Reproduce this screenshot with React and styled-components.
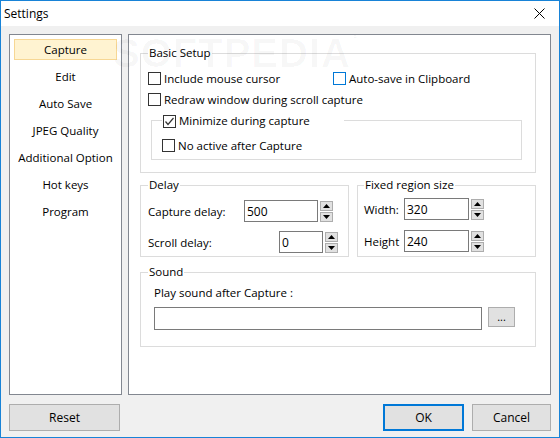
import React from "react";
import styled, { createGlobalStyle } from "styled-components";

const GlobalStyle = createGlobalStyle`
  html, body { margin: 0; padding: 0; background: #fff; }
  body {
    font-family: "Open Sans", "Noto Sans", sans-serif;
    font-size: 11.5px;
    color: #000;
  }
  * { box-sizing: border-box; }
`;

const navItems = [
  "Capture",
  "Edit",
  "Auto Save",
  "JPEG Quality",
  "Additional Option",
  "Hot keys",
  "Program",
];

const CheckIcon = () => (
  <svg width="11" height="11" viewBox="0 0 11 11">
    <polyline points="1.5,5.5 4,8.5 9.5,2" fill="none" stroke="#333" strokeWidth="1.2" />
  </svg>
);

const Arrow = ({ down }) => (
  <svg width="7" height="4" viewBox="0 0 7 4">
    <polygon points={down ? "0,0 7,0 3.5,4" : "0,4 7,4 3.5,0"} fill="#000" />
  </svg>
);

const Check = ({ label, checked, focused, width }) => (
  <CheckItem width={width}>
    <Box focused={focused}>{checked && <CheckIcon />}</Box>
    <span>{label}</span>
  </CheckItem>
);

const Spin = () => (
  <Spinner>
    <SpinButton>
      <Arrow />
    </SpinButton>
    <SpinButton>
      <Arrow down />
    </SpinButton>
  </Spinner>
);

const NumberField = ({ label, labelWidth, value, inputWidth }) => (
  <FieldRow>
    <FieldLabel width={labelWidth}>{label}</FieldLabel>
    <TextInput width={inputWidth}>{value}</TextInput>
    <Spin />
  </FieldRow>
);

const App = () => {
  return (
    <>
      <GlobalStyle />
      <Window>
        <TitleBar>
          <span>Settings</span>
          <svg width="11" height="11" viewBox="0 0 11 11">
            <path d="M0.5 0.5 L10.5 10.5 M10.5 0.5 L0.5 10.5" stroke="#000" strokeWidth="1" />
          </svg>
        </TitleBar>
        <Body>
          <Panels>
            <Nav>
              {navItems.map((item, i) => (
                <NavItem key={item} active={i === 0}>
                  {item}
                </NavItem>
              ))}
            </Nav>
            <Content>
              <Group pad="7px 7px 12px 7px">
                <Legend>Basic Setup</Legend>
                <CheckRow>
                  <Check label="Include mouse cursor" width={185} />
                  <Check label="Auto-save in Clipboard" focused />
                </CheckRow>
                <CheckRow>
                  <Check label="Redraw window during scroll capture" />
                </CheckRow>
                <InnerGroup>
                  <InnerLegend>
                    <Check label="Minimize during capture" checked />
                  </InnerLegend>
                  <CheckRow>
                    <Check label="No active after Capture" />
                  </CheckRow>
                </InnerGroup>
              </Group>

              <GroupRow>
                <Group pad="7px 0 3px 7px" width={209}>
                  <Legend>Delay</Legend>
                  <Fields gap={9}>
                    <NumberField label="Capture delay:" labelWidth={96} value="500" inputWidth={74} />
                    <NumberField label="Scroll delay:" labelWidth={131} value="0" inputWidth={44} />
                  </Fields>
                </Group>
                <Group pad="5px 0 4px 6px" grow>
                  <Legend>Fixed region size</Legend>
                  <Fields gap={10}>
                    <NumberField label="Width:" labelWidth={40} value="320" inputWidth={65} />
                    <NumberField label="Height" labelWidth={40} value="240" inputWidth={65} />
                  </Fields>
                </Group>
              </GroupRow>

              <Group pad="5px 0 16px 13px" top={7}>
                <Legend shift={-6}>Sound</Legend>
                <SoundLabel>Play sound after Capture :</SoundLabel>
                <SoundRow>
                  <TextInput width={328} height={23} />
                  <BrowseButton>...</BrowseButton>
                </SoundRow>
              </Group>
            </Content>
          </Panels>
          <Footer>
            <Button width={111}>Reset</Button>
            <Spacer />
            <Button width={81} primary>
              OK
            </Button>
            <Button width={79}>Cancel</Button>
          </Footer>
        </Body>
        <Watermark aria-hidden="true">
          SOFTPEDIA<sup>®</sup>
        </Watermark>
      </Window>
    </>
  );
};

export default App;

const Window = styled.div`
  position: relative;
  width: 560px;
  height: 438px;
  border: 1px solid #1883d7;
  display: flex;
  flex-direction: column;
  overflow: hidden;
`;

const TitleBar = styled.div`
  height: 25px;
  background: #fff;
  display: flex;
  align-items: center;
  justify-content: space-between;
  padding: 0 14px 0 3px;
  font-size: 12px;
`;

const Body = styled.div`
  flex: 1;
  background: #f0f0f0;
  padding: 8px 8px 6px 8px;
  display: flex;
  flex-direction: column;
`;

const Panels = styled.div`
  display: flex;
  gap: 6px;
  height: 361px;
`;

const Nav = styled.div`
  width: 113px;
  background: #fff;
  border: 1px solid #828790;
  padding: 4px;
  display: flex;
  flex-direction: column;
  gap: 6px;
`;

const NavItem = styled.div`
  height: 21px;
  display: flex;
  align-items: center;
  justify-content: center;
  white-space: nowrap;
  background: ${({ active }) => (active ? "#fff3d1" : "transparent")};
  border: 1px solid ${({ active }) => (active ? "#f7d794" : "transparent")};
`;

const Content = styled.div`
  flex: 1;
  background: #fff;
  border: 1px solid #828790;
  padding: 10px 14px 0 11px;
`;

const Group = styled.fieldset`
  margin: ${({ top }) => top || 0}px 0 0 0;
  border: 1px solid #dcdcdc;
  padding: ${({ pad }) => pad};
  min-width: 0;
  width: ${({ width }) => (width ? `${width}px` : "auto")};
  flex: ${({ grow }) => (grow ? 1 : "none")};
`;

const Legend = styled.legend`
  padding: 0 1px;
  margin-left: ${({ shift }) => shift || 0}px;
  line-height: 16px;
`;

const CheckRow = styled.div`
  height: 21px;
  display: flex;
  align-items: center;
`;

const CheckItem = styled.label`
  display: flex;
  align-items: center;
  gap: 3px;
  width: ${({ width }) => (width ? `${width}px` : "auto")};
  line-height: 16px;
  white-space: nowrap;
`;

const Box = styled.span`
  width: 13px;
  height: 13px;
  flex: none;
  border: 1px solid ${({ focused }) => (focused ? "#0078d7" : "#333")};
  background: #fff;
  display: flex;
  align-items: center;
  justify-content: center;
`;

const InnerGroup = styled.fieldset`
  margin: 1px 6px 0 3px;
  border: 1px solid #dcdcdc;
  padding: 6px 0 3px 10px;
  min-width: 0;
`;

const InnerLegend = styled.legend`
  padding: 2px 34px 0 1px;
  line-height: 16px;
`;

const GroupRow = styled.div`
  display: flex;
  gap: 8px;
  margin-top: 4px;
`;

const Fields = styled.div`
  display: flex;
  flex-direction: column;
  gap: ${({ gap }) => gap}px;
`;

const FieldRow = styled.div`
  display: flex;
  align-items: center;
  height: 22px;
`;

const FieldLabel = styled.span`
  width: ${({ width }) => width}px;
  flex: none;
  white-space: nowrap;
`;

const TextInput = styled.div`
  width: ${({ width }) => width}px;
  height: ${({ height }) => height || 22}px;
  border: 1px solid #7a7a7a;
  background: #fff;
  padding: 0 2px;
  display: flex;
  align-items: center;
  font-size: 12px;
  flex: none;
`;

const Spinner = styled.div`
  margin-left: 2px;
  display: flex;
  flex-direction: column;
  gap: 1px;
`;

const SpinButton = styled.div`
  width: 13px;
  height: 10px;
  background: #e1e1e1;
  border: 1px solid #adadad;
  display: flex;
  align-items: center;
  justify-content: center;
`;

const SoundLabel = styled.div`
  line-height: 16px;
`;

const SoundRow = styled.div`
  display: flex;
  align-items: flex-start;
  gap: 6px;
  margin-top: 6px;
`;

const BrowseButton = styled.div`
  width: 27px;
  height: 20px;
  background: #e1e1e1;
  border: 1px solid #adadad;
  display: flex;
  align-items: center;
  justify-content: center;
  font-size: 11px;
  line-height: 1;
  padding-bottom: 2px;
`;

const Footer = styled.div`
  margin-top: auto;
  display: flex;
  gap: 8px;
`;

const Spacer = styled.div`
  flex: 1;
`;

const Button = styled.div`
  width: ${({ width }) => width}px;
  height: 27px;
  background: #e1e1e1;
  border: ${({ primary }) => (primary ? "2px solid #0078d7" : "1px solid #adadad")};
  display: flex;
  align-items: center;
  justify-content: center;
  font-size: 12px;
`;

const Watermark = styled.div`
  position: absolute;
  left: 112px;
  top: 30px;
  font-family: "Liberation Sans", sans-serif;
  font-weight: bold;
  font-size: 40px;
  letter-spacing: 1px;
  color: rgba(0, 0, 0, 0.03);
  pointer-events: none;
  user-select: none;
  sup {
    font-size: 12px;
    vertical-align: top;
  }
`;
